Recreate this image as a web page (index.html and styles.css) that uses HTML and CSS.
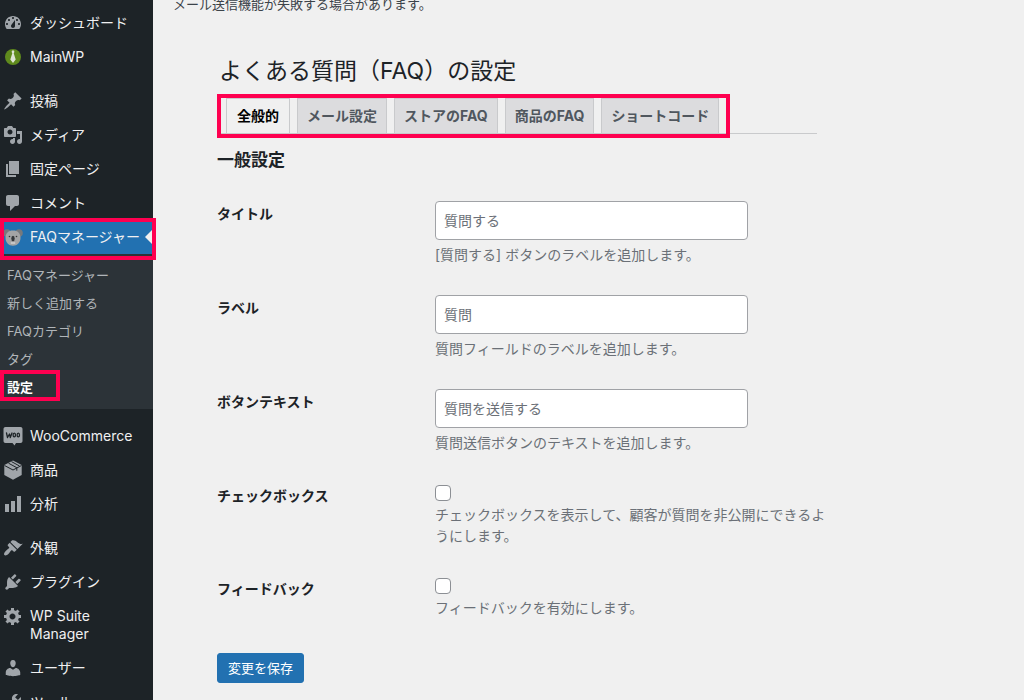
FILE: index.html
```
<!DOCTYPE html>
<html lang="ja">
<head>
  <meta charset="UTF-8" />
  <title>よくある質問（FAQ）の設定</title>
  <meta name="viewport" content="width=device-width, initial-scale=1.0"/>
  <link rel="stylesheet" href="styles.css">
</head>
<body>
  <div class="layout">
    <!-- サイドメニュー -->
    <nav class="sidebar">
      <ul class="menu">
        <li><a class="menu-link" href="#">
          <svg class="icon" viewBox="0 0 20 20"><path fill-rule="evenodd" d="M3.76 16h12.48c1.1-1.37 1.76-3.11 1.76-5 0-4.42-3.58-8-8-8s-8 3.58-8 8c0 1.89.66 3.63 1.76 5zM10 4c.55 0 1 .45 1 1s-.45 1-1 1-1-.45-1-1 .45-1 1-1zM6 6c.55 0 1 .45 1 1s-.45 1-1 1-1-.45-1-1 .45-1 1-1zm8 0c.55 0 1 .45 1 1s-.45 1-1 1-1-.45-1-1 .45-1 1-1zm-5.37 5.55L12 7v6c0 1.1-.9 2-2 2s-2-.9-2-2c0-.57.24-1.08.63-1.45zM4 10c.55 0 1 .45 1 1s-.45 1-1 1-1-.45-1-1 .45-1 1-1zm12 0c.55 0 1 .45 1 1s-.45 1-1 1-1-.45-1-1 .45-1 1-1z"/></svg>
          <span>ダッシュボード</span></a></li>
        <li><a class="menu-link" href="#">
          <svg class="icon" viewBox="0 0 20 20"><circle cx="10" cy="10" r="8" fill="#5f8a1d"/><path fill="#dfe5d6" d="M9 3.5h2l.4 1.6-.7 1.2 2 6.3L10 16l-2.7-3.4 2-6.3-.7-1.2z"/></svg>
          <span>MainWP</span></a></li>
        <li class="separator"></li>
        <li><a class="menu-link" href="#">
          <svg class="icon" viewBox="0 0 20 20"><path d="M10.44 3.02l1.82-1.82 6.36 6.35-1.83 1.82c-1.05-.68-2.48-.57-3.41.36l-.75.75c-.92.93-1.04 2.35-.35 3.41l-1.83 1.82-2.41-2.41-2.8 2.79c-.42.42-3.38 2.71-3.8 2.29s1.86-3.39 2.28-3.81l2.79-2.79L4.1 9.36l1.83-1.82c1.05.69 2.48.57 3.4-.36l.75-.75c.93-.92 1.05-2.35.36-3.41z"/></svg>
          <span>投稿</span></a></li>
        <li><a class="menu-link" href="#">
          <svg class="icon" viewBox="0 0 20 20"><path fill-rule="evenodd" d="M13 11V4c0-.55-.45-1-1-1h-1.67L9 1H5L3.67 3H2c-.55 0-1 .45-1 1v7c0 .55.45 1 1 1h10c.55 0 1-.45 1-1zM7 4.5c1.38 0 2.5 1.12 2.5 2.5S8.38 9.5 7 9.5 4.5 8.38 4.5 7 5.62 4.5 7 4.5zM14 6h5v10.5c0 1.38-1.12 2.5-2.5 2.5S14 17.88 14 16.5s1.12-2.5 2.5-2.5c.17 0 .34.02.5.05V9h-3V6zm-4 8.05V13h2v3.5c0 1.38-1.12 2.5-2.5 2.5S7 17.88 7 16.5 8.12 14 9.5 14c.17 0 .34.02.5.05z"/></svg>
          <span>メディア</span></a></li>
        <li><a class="menu-link" href="#">
          <svg class="icon" viewBox="0 0 20 20"><path d="M6 15V2h10v13H6zm-1 1h8v2H3V5h2v11z"/></svg>
          <span>固定ページ</span></a></li>
        <li><a class="menu-link" href="#">
          <svg class="icon" viewBox="0 0 20 20"><path d="M5 2h9c1.1 0 2 .9 2 2v7c0 1.1-.9 2-2 2h-2l-5 5v-5H5c-1.1 0-2-.9-2-2V4c0-1.1.9-2 2-2z"/></svg>
          <span>コメント</span></a></li>
        <li class="current marked"><a class="menu-link" href="#">
          <svg class="icon" viewBox="0 0 20 20">
            <circle cx="4" cy="6" r="3.8" fill="#77797c"/>
            <circle cx="16" cy="6" r="3.8" fill="#77797c"/>
            <path fill="#a4a4a5" d="M10 3.500c4.700 0 7.500 2.700 7.500 7.200 0 4.500-3.200 8-7.500 8s-7.500-3.500-7.500-8c0-4.500 2.800-7.200 7.500-7.200z"/>
            <ellipse cx="10" cy="11.500" rx="1.700" ry="2.800" fill="#35373a"/>
            <circle cx="6.500" cy="9.500" r=".8" fill="#35373a"/>
            <circle cx="13.500" cy="9.500" r=".8" fill="#35373a"/>
            <path d="M7.800 16h4.400" stroke="#dedede" stroke-width="1.200"/>
          </svg>
          <span>FAQマネージャー</span></a></li>
      </ul>

      <ul class="submenu">
        <li><a href="#">FAQマネージャー</a></li>
        <li><a href="#">新しく追加する</a></li>
        <li><a href="#">FAQカテゴリ</a></li>
        <li><a href="#">タグ</a></li>
        <li class="active"><a href="#">設定</a></li>
      </ul>

      <ul class="menu">
        <li class="separator"></li>
        <li><a class="menu-link" href="#">
          <svg class="icon" viewBox="0 0 20 20"><path d="M2.500 1h15c1.200 0 2 .8 2 2v12c0 1.200-.8 2-2 2H13l-1.500 2.500L9.500 17h-7c-1.200 0-2-.8-2-2V3c0-1.200.8-2 2-2z"/><g fill="none" stroke="#1d2327" stroke-width="1.300" stroke-linecap="round" stroke-linejoin="round"><path d="M3.500 7l1 4.500 2-3.500.8 3.500L9 7"/><ellipse cx="11.300" cy="9" rx="1.200" ry="1.900"/><ellipse cx="15.300" cy="9" rx="1.200" ry="1.900"/></g></svg>
          <span>WooCommerce</span></a></li>
        <li><a class="menu-link" href="#">
          <svg class="icon" viewBox="0 0 20 20"><path d="M10 .5L18.700 5v10L10 19.700 1.300 15V5z"/><path fill="none" stroke="#1d2327" stroke-width="1" d="M1.500 5.500L10 10l8.500-4.500M5.500 3.200l8.300 4.500v3M8.500 1.600L16.500 6"/></svg>
          <span>商品</span></a></li>
        <li><a class="menu-link" href="#">
          <svg class="icon" viewBox="0 0 20 20"><path d="M18 18V2h-4v16h4zm-6 0V7H8v11h4zm-6 0v-8H2v8h4z"/></svg>
          <span>分析</span></a></li>
        <li class="separator"></li>
        <li><a class="menu-link" href="#">
          <svg class="icon" viewBox="0 0 20 20"><path d="M14.480 11.060L7.410 3.990l1.500-1.500c.5-.56 2.300-.47 3.510.32 1.210.8 1.430 1.280 2.910 2.100 1.180.64 2.450 1.260 4.450.85zm-.71.71L6.700 4.700 4.930 6.470c-.39.39-.39 1.020 0 1.410l1.060 1.060c.39.39.39 1.030 0 1.420-.6.6-1.430 1.110-2.210 1.690-.35.26-.7.53-1.010.84C1.430 14.230.4 16.080 1.400 17.070c.99 1 2.840-.03 4.180-1.360.31-.31.58-.66.85-1.020.57-.78 1.080-1.610 1.690-2.210.39-.39 1.020-.39 1.410 0l1.060 1.060c.39.39 1.020.39 1.410 0z"/></svg>
          <span>外観</span></a></li>
        <li><a class="menu-link" href="#">
          <svg class="icon" viewBox="0 0 20 20"><path d="M13.110 4.360L9.870 7.600 8 5.730l3.240-3.240c.35-.34 1.050-.2 1.560.32.52.51.66 1.210.31 1.550zm-8 1.770l.91-1.120 9.010 9.010-1.190.84c-.71.71-2.630 1.160-3.820 1.160H6.140L4.900 17.260c-.59.59-1.540.59-2.120 0-.59-.58-.59-1.530 0-2.120l1.240-1.240v-3.880c0-1.130.4-3.190 1.090-3.890zm7.260 3.970l3.240-3.240c.34-.35 1.040-.21 1.550.31.52.51.66 1.210.31 1.550l-3.240 3.250z"/></svg>
          <span>プラグイン</span></a></li>
        <li><a class="menu-link" href="#">
          <svg class="icon" viewBox="0 0 20 20"><path fill-rule="evenodd" d="M18 12h-2.180c-.17.7-.44 1.350-.81 1.930l1.540 1.540-2.100 2.100-1.540-1.540c-.58.36-1.230.63-1.910.79V19H8v-2.180c-.68-.16-1.330-.43-1.910-.79l-1.540 1.540-2.120-2.120 1.540-1.540c-.36-.58-.63-1.230-.79-1.910H1V9.030h2.170c.16-.7.44-1.350.8-1.940L2.430 5.550l2.100-2.100 1.540 1.540c.58-.37 1.240-.64 1.930-.81V2h3v2.180c.68.16 1.330.43 1.910.79l1.540-1.540 2.120 2.120-1.540 1.540c.36.59.64 1.240.8 1.940H18V12zm-8.500 1.500c1.660 0 3-1.340 3-3s-1.340-3-3-3-3 1.340-3 3 1.340 3 3 3z"/></svg>
          <span>WP Suite Manager</span></a></li>
        <li><a class="menu-link" href="#">
          <svg class="icon" viewBox="0 0 20 20"><path d="M10 9.250c-2.270 0-2.730-3.440-2.730-3.440C7 4.020 7.820 2 9.970 2c2.160 0 2.980 2.020 2.710 3.810 0 0-.41 3.440-2.680 3.440zm0 2.570L12.720 10c2.390 0 4.520 2.330 4.520 4.530v2.490s-3.650 1.130-7.240 1.130c-3.650 0-7.240-1.130-7.240-1.130v-2.490c0-2.250 1.940-4.480 4.470-4.480z"/></svg>
          <span>ユーザー</span></a></li>
        <li><a class="menu-link" href="#">
          <svg class="icon" viewBox="0 0 20 20"><path fill-rule="evenodd" d="M16.680 9.770c-1.340 1.340-3.300 1.670-4.950.99l-5.410 6.520c-.99.99-2.590.99-3.580 0s-.99-2.590 0-3.570l6.520-5.420c-.68-1.650-.35-3.610.99-4.950 1.280-1.280 3.120-1.620 4.720-1.060l-2.890 2.890 2.820 2.820 2.860-2.870c.53 1.580.18 3.390-1.080 4.650zM3.810 16.210c.4.39 1.040.39 1.430 0 .4-.4.4-1.040 0-1.430-.39-.4-1.030-.4-1.430 0-.39.39-.39 1.030 0 1.430z"/></svg>
          <span>ツール</span></a></li>
      </ul>
    </nav>

    <!-- メイン -->
    <main class="content">
      <p class="notice">メール送信機能が失敗する場合があります。</p>

      <div class="settings">
        <h1>よくある質問（FAQ）の設定</h1>

        <div class="tabs">
          <a class="tab selected" href="#">全般的</a>
          <a class="tab" href="#">メール設定</a>
          <a class="tab" href="#">ストアのFAQ</a>
          <a class="tab" href="#">商品のFAQ</a>
          <a class="tab" href="#">ショートコード</a>
          <div class="tabs-mark"></div>
        </div>

        <form>
          <h2>一般設定</h2>
          <div class="form-row">
            <label for="title">タイトル</label>
            <div class="field">
              <input type="text" id="title" value="質問する">
              <p>[質問する] ボタンのラベルを追加します。</p>
            </div>
          </div>
          <div class="form-row">
            <label for="label">ラベル</label>
            <div class="field">
              <input type="text" id="label" value="質問">
              <p>質問フィールドのラベルを追加します。</p>
            </div>
          </div>
          <div class="form-row">
            <label for="buttonText">ボタンテキスト</label>
            <div class="field">
              <input type="text" id="buttonText" value="質問を送信する">
              <p>質問送信ボタンのテキストを追加します。</p>
            </div>
          </div>
          <div class="form-row">
            <label for="private">チェックボックス</label>
            <div class="field">
              <div class="check"><input type="checkbox" id="private"></div>
              <p>チェックボックスを表示して、顧客が質問を非公開にできるようにします。</p>
            </div>
          </div>
          <div class="form-row">
            <label for="feedback">フィードバック</label>
            <div class="field">
              <div class="check"><input type="checkbox" id="feedback"></div>
              <p>フィードバックを有効にします。</p>
            </div>
          </div>
          <button class="save-button" type="submit">変更を保存</button>
        </form>
      </div>
    </main>
  </div>
</body>
</html>
```
FILE: styles.css
```
body {
  margin: 0;
  font-family: Inter, "Noto Sans CJK JP", sans-serif;
  font-size: 14px;
  color: #1d2327;
  background: #f0f0f0;
}
ul {
  list-style: none;
  margin: 0;
  padding: 0;
}
a {
  color: inherit;
  text-decoration: none;
}
.layout {
  display: flex;
  height: 100vh;
  overflow: hidden;
}

/* サイドメニュー */
.sidebar {
  flex: 0 0 153px;
  padding-top: 6px;
  background: #1d2327;
  color: #f0f0f1;
}
.menu-link {
  display: flex;
  align-items: flex-start;
  gap: 7px;
  padding: 8px 8px 8px 3px;
  line-height: 18px;
}
.menu .separator {
  height: 10px;
}
.icon {
  flex: 0 0 20px;
  width: 20px;
  height: 20px;
  margin: -1px 0;
  fill: #a0a5aa;
}
.current {
  position: relative;
  background: #2271b1;
}
.current .menu-link {
  padding-right: 0;
  white-space: nowrap;
}
.current::before {
  content: "";
  position: absolute;
  right: 0;
  top: 9px;
  border: 8px solid transparent;
  border-right-color: #f0f0f0;
  border-left-width: 0;
}
.marked::after {
  content: "";
  position: absolute;
  top: -2px;
  left: 0;
  right: -3px;
  bottom: -6px;
  border: 4px solid #ff0050;
}
.submenu {
  padding: 7px 0 8px;
  background: #2c3338;
  color: #b0b5b9;
  font-size: 13px;
}
.submenu a {
  display: block;
  padding: 0 7px;
  line-height: 28px;
}
.submenu .active {
  position: relative;
  color: #fff;
  font-weight: bold;
}
.submenu .active::after {
  content: "";
  position: absolute;
  top: -3px;
  left: 0;
  width: 52px;
  height: 23px;
  border: 4px solid #ff0050;
}

/* メイン */
.content {
  flex: 1;
  min-width: 0;
  padding: 0 20px;
}
.notice {
  margin: -5px 0 0;
  font-size: 13px;
  line-height: 18px;
  color: #3c434a;
}
.settings {
  max-width: 614px;
  margin: 43px 0 0 44px;
}
h1 {
  margin: 0 0 11px 2px;
  font-size: 23px;
  font-weight: normal;
  line-height: 30px;
}
.tabs {
  position: relative;
  display: flex;
  gap: 7px;
  margin-right: 14px;
  padding: 1px 0 0 9px;
  border-bottom: 1px solid #c9cacc;
}
.tab {
  padding: 0 9px;
  border: 1px solid #c9cacc;
  border-bottom: 0;
  background: #dcdcde;
  color: #50575e;
  font-weight: bold;
  line-height: 34px;
  white-space: nowrap;
}
.tab.selected {
  padding: 0 10px;
  background: #f0f0f0;
  color: #000;
}
.tabs-mark {
  position: absolute;
  top: -3px;
  left: 0;
  width: 505px;
  bottom: -5px;
  border: 4px solid #ff0050;
  pointer-events: none;
}
h2 {
  margin: 14px 0;
  font-size: 17px;
  line-height: 24px;
}
.form-row {
  display: flex;
  padding: 15px 0;
}
.form-row label {
  flex: 0 0 218px;
  padding-top: 5px;
  font-weight: bold;
  line-height: 16px;
}
.field {
  flex: 1;
}
.field p {
  margin: 0;
  line-height: 21px;
  color: #6b7077;
}
.field input[type="text"] {
  display: block;
  box-sizing: border-box;
  width: 79%;
  height: 39px;
  margin-bottom: 4px;
  padding: 0 8px 2px;
  border: 1px solid #a0a2a6;
  border-radius: 4px;
  background: #fff;
  color: #6b7077;
  font: inherit;
}
.check {
  display: flex;
  align-items: center;
  height: 20px;
  padding-bottom: 1px;
}
.check input {
  appearance: none;
  width: 16px;
  height: 16px;
  margin: 0;
  border: 1px solid #8c8f94;
  border-radius: 4px;
  background: #fff;
}
.save-button {
  height: 30px;
  margin-top: 20px;
  padding: 0 10px 2px;
  border: 1px solid #2271b1;
  border-radius: 3px;
  background: #2271b1;
  color: #fff;
  font-family: inherit;
  font-size: 13px;
}
```
